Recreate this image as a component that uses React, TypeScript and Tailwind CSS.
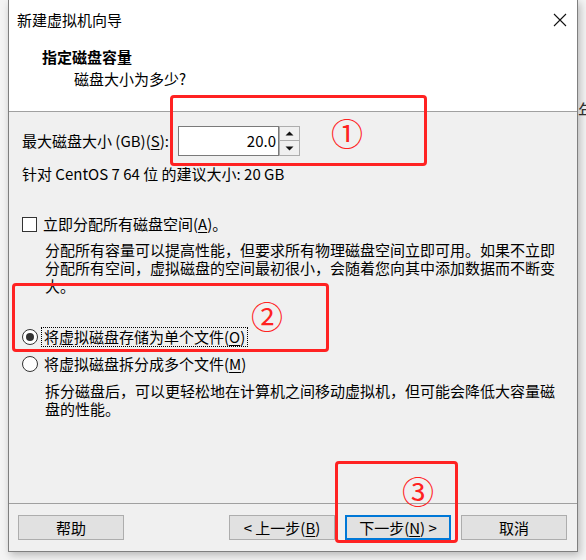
import React from 'react';

const font = { fontFamily: '"Noto Sans CJK SC", "Microsoft YaHei", sans-serif' };

function U({ children }: { children: React.ReactNode }) {
  return <span className="underline underline-offset-2">{children}</span>;
}

function Mark({ className }: { className: string }) {
  return <div className={`absolute border-[3px] border-[#ff2222] rounded-[4px] ${className}`} />;
}

function Num({ className, n }: { className: string; n: string }) {
  return (
    <div className={`absolute text-[#ff2222] text-[32px] leading-[32px] w-[34px] text-center ${className}`}>{n}</div>
  );
}

function Btn({ children, active }: { children: React.ReactNode; active?: boolean }) {
  return (
    <button
      className={`w-[106px] h-[25px] bg-[#e1e1e1] text-[15px] leading-[20px] flex items-center justify-center whitespace-pre ${
        active ? 'border-2 border-[#0078d7]' : 'border border-[#adadad]'
      }`}
    >
      {children}
    </button>
  );
}

export default function App() {
  return (
    <div className="relative w-[586px] h-[560px] overflow-hidden bg-[#f4f4f4] text-black" style={font}>
      <div className="absolute left-[578px] top-[100px] text-[18px] leading-[20px] text-[#333]">年</div>
      <div className="relative ml-[8px] w-[570px] h-[552px] border-x border-b border-[#7f7f7f] flex flex-col bg-[#f0f0f0] shadow-[2px_3px_8px_rgba(0,0,0,0.25)]">
        {/* title bar */}
        <div className="h-[40px] bg-white flex items-center justify-between pl-[8px] pr-[9px]">
          <span className="text-[15px] leading-[20px]">新建虚拟机向导</span>
          <svg width="14" height="14" viewBox="0 0 14 14" className="mr-[1px]">
            <path d="M1 1 L13 13 M13 1 L1 13" stroke="#111" strokeWidth="1.1" />
          </svg>
        </div>
        {/* header */}
        <div className="h-[72px] bg-white border-b border-[#a0a0a0] pt-[7px]">
          <div className="pl-[33px] text-[15px] leading-[20px] font-bold">指定磁盘容量</div>
          <div className="pl-[65px] mt-[2px] text-[15px] leading-[20px]">磁盘大小为多少?</div>
        </div>
        {/* body */}
        <div className="flex-1 pl-[13px] text-[15px] leading-[18px]">
          <div className="mt-[14px] flex items-center h-[30px]">
            <span className="w-[156px] whitespace-nowrap">
              最大磁盘大小 (GB)(<U>S</U>):
            </span>
            <div className="w-[101px] h-[30px] bg-white border border-[#7a7a7a] flex items-center justify-end pr-[2px]">
              20.0
            </div>
            <div className="flex flex-col w-[21px] h-[30px]">
              <div className="h-[15px] border border-[#adadad] bg-[#f0f0f0] flex items-center justify-center">
                <svg width="9" height="5" viewBox="0 0 9 5">
                  <path d="M0.5 4.5 L4.5 0.5 L8.5 4.5 Z" fill="#111" />
                </svg>
              </div>
              <div className="h-[15px] border border-t-0 border-[#adadad] bg-[#f0f0f0] flex items-center justify-center">
                <svg width="9" height="5" viewBox="0 0 9 5">
                  <path d="M0.5 0.5 L4.5 4.5 L8.5 0.5 Z" fill="#111" />
                </svg>
              </div>
            </div>
          </div>
          <div className="mt-[9px] whitespace-nowrap">针对 CentOS 7 64 位 的建议大小: 20 GB</div>

          <div className="mt-[32px] flex items-center h-[18px]">
            <span className="w-[15px] h-[15px] bg-white border border-[#333]" />
            <span className="ml-[6px] whitespace-nowrap">
              立即分配所有磁盘空间(<U>A</U>)。
            </span>
          </div>
          <div className="mt-[8px] pl-[23px] whitespace-nowrap">
            <div>分配所有容量可以提高性能，但要求所有物理磁盘空间立即可用。如果不立即</div>
            <div>分配所有空间，虚拟磁盘的空间最初很小，会随着您向其中添加数据而不断变</div>
            <div>大。</div>
          </div>

          <div className="mt-[32px] flex items-center h-[20px]">
            <span className="w-[16px] h-[16px] rounded-full bg-white border border-[#333] flex items-center justify-center">
              <span className="w-[8px] h-[8px] rounded-full bg-[#333]" />
            </span>
            <span className="ml-[3px] px-[2px] border border-dotted border-black leading-[18px] whitespace-nowrap">
              将虚拟磁盘存储为单个文件(<U>O</U>)
            </span>
          </div>
          <div className="mt-[7px] flex items-center h-[20px]">
            <span className="w-[16px] h-[16px] rounded-full bg-white border border-[#333]" />
            <span className="ml-[6px] whitespace-nowrap">
              将虚拟磁盘拆分成多个文件(<U>M</U>)
            </span>
          </div>
          <div className="mt-[8px] pl-[23px] whitespace-nowrap">
            <div>拆分磁盘后，可以更轻松地在计算机之间移动虚拟机，但可能会降低大容量磁</div>
            <div>盘的性能。</div>
          </div>
        </div>
        {/* footer */}
        <div className="h-[48px] border-t border-[#a0a0a0] pt-[11px] pl-[9px] pr-[10px] flex justify-between">
          <Btn>帮助</Btn>
          <div className="flex gap-[10px]">
            <Btn>
              {'< 上一步('}<U>B</U>)
            </Btn>
            <Btn active>
              下一步(<U>N</U>){' >'}
            </Btn>
            <Btn>取消</Btn>
          </div>
        </div>
      </div>

      {/* annotations */}
      <Mark className="left-[170px] top-[95px] w-[257px] h-[71px]" />
      <Num className="left-[330px] top-[116px]" n="①" />
      <Mark className="left-[12px] top-[283px] w-[317px] h-[69px]" />
      <Num className="left-[250px] top-[299px]" n="②" />
      <Mark className="left-[335px] top-[461px] w-[123px] h-[82px]" />
      <Num className="left-[401px] top-[474px]" n="③" />
    </div>
  );
}
